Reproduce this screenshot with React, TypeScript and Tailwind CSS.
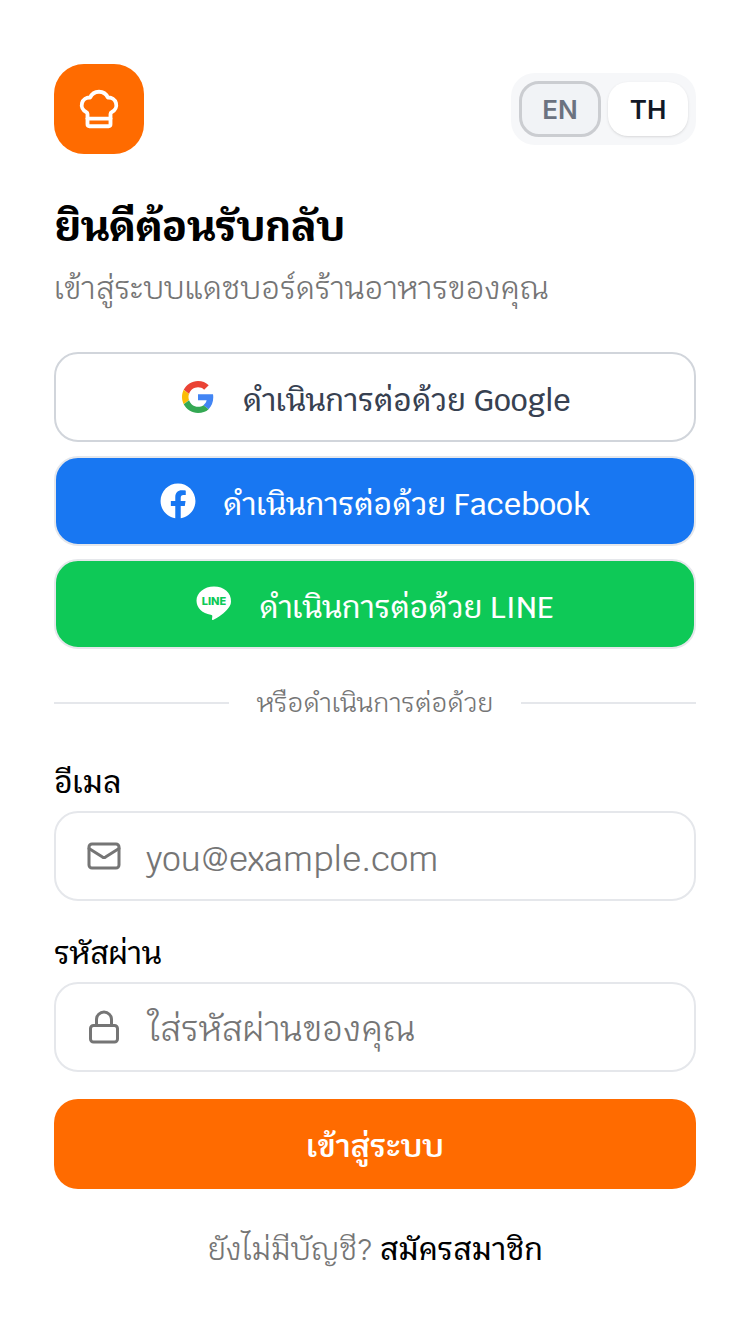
import { ChefHat, Lock, Mail } from "lucide-react";
import { FaFacebook } from "react-icons/fa";

function GoogleIcon() {
  return (
    <span className="flex h-[36px] w-[36px] items-center justify-center">
      <svg width="32" height="32" viewBox="0 0 48 48">
        <path fill="#EA4335" d="M24 9.500c3.500 0 6.700 1.200 9.200 3.600l6.900-6.900C35.900 2.400 30.500 0 24 0 14.600 0 6.500 5.400 2.600 13.200l8 6.200C12.500 13.600 17.800 9.500 24 9.500z" />
        <path fill="#4285F4" d="M46.900 24.500c0-1.600-.1-3.100-.4-4.500H24v9h12.900c-.6 3-2.200 5.500-4.800 7.200l7.700 6c4.500-4.200 7.100-10.300 7.100-17.700z" />
        <path fill="#FBBC05" d="M10.500 28.600c-.5-1.500-.8-3-.8-4.600s.3-3.200.8-4.600l-8-6.200C.9 16.500 0 20.100 0 24s.9 7.500 2.600 10.800l7.900-6.200z" />
        <path fill="#34A853" d="M24 48c6.500 0 11.900-2.100 15.900-5.800l-7.700-6c-2.200 1.500-4.900 2.300-8.200 2.300-6.200 0-11.500-4.200-13.400-9.800l-8 6.200C6.500 42.600 14.600 48 24 48z" />
      </svg>
    </span>
  );
}

function LineIcon() {
  return (
    <svg width="36" height="36" viewBox="0 0 36 36">
      <path fill="#fff" d="M18 .5C8.100.5.500 6.800.5 14.700c0 7.100 6 12.900 14.200 14 .6.100 1.300.4 1.500.9.200.5.100 1.200 0 1.700l-.2 1.400c-.1.500-.3 1.700 1.500 1 1.800-.8 9.700-5.700 13.300-9.800 2.400-2.600 4.200-5.300 4.200-8.200C35.500 6.800 27.900.5 18 .5z" />
      <text x="18" y="19" textAnchor="middle" fontSize="11" fontWeight="800" fill="#0ec957" fontFamily="Inter, sans-serif">LINE</text>
    </svg>
  );
}

const socials = [
  { label: "ดำเนินการต่อด้วย Google", icon: <GoogleIcon />, cls: "bg-white text-[#374151] border-[#d1d5db]" },
  { label: "ดำเนินการต่อด้วย Facebook", icon: <FaFacebook size={36} />, cls: "bg-[#1877f2] text-white border-[#e5e7eb]" },
  { label: "ดำเนินการต่อด้วย LINE", icon: <LineIcon />, cls: "-mt-px bg-[#0ec957] text-white border-[#e5e7eb]" },
];

export default function App() {
  return (
    <div className="min-h-[1334px] bg-white px-[54px] pt-[64px] font-['Krub','Noto_Sans',sans-serif] text-black">
      <div className="flex items-center justify-between">
        <div className="flex h-[90px] w-[90px] items-center justify-center rounded-[30px] bg-[#ff6b00] text-white">
          <ChefHat size={46} strokeWidth={2} />
        </div>
        <div className="flex h-[72px] w-[185px] items-center gap-[7px] rounded-[24px] bg-[#f6f7f9] pl-[8px] font-['Inter',sans-serif]">
          <div className="flex h-[56px] w-[82px] items-center justify-center rounded-[20px] border-[3px] border-[#cbcdd1] bg-[#f1f3f6] text-[26px] font-semibold text-[#6b7280]">EN</div>
          <div className="flex h-[54px] w-[80px] items-center justify-center rounded-[20px] bg-white text-[26px] font-semibold text-[#111827] shadow-sm">TH</div>
        </div>
      </div>

      <h1 className="mt-[47px] text-[40.5px] leading-[52px] font-bold">ยินดีต้อนรับกลับ</h1>
      <p className="mt-[13px] text-[30.8px] leading-[44px] text-[#757575]">เข้าสู่ระบบแดชบอร์ดร้านอาหารของคุณ</p>

      <div className="mt-[42px] flex flex-col gap-[14px]">
        {socials.map((s) => (
          <div key={s.label} className={`flex h-[90px] items-center justify-center gap-[27px] rounded-[24px] border-2 text-[30.25px] font-medium ${s.cls}`}>
            {s.icon}
            <span className="pt-[8px]">{s.label}</span>
          </div>
        ))}
      </div>

      <div className="mt-[39px] flex items-center gap-[28px]">
        <div className="h-[2px] flex-1 bg-[#e5e7eb]" />
        <span className="text-[26.2px] leading-[30px] text-[#757575]">หรือดำเนินการต่อด้วย</span>
        <div className="h-[2px] flex-1 bg-[#e5e7eb]" />
      </div>

      <label className="mt-[45px] block text-[30px] leading-[40px] font-medium">อีเมล</label>
      <div className="mt-[8px] flex h-[90px] items-center gap-[24px] rounded-[24px] border-2 border-[#e5e7eb] pl-[30px] text-[33.5px] text-[#757575]">
        <Mail size={36} strokeWidth={2} className="shrink-0" />
        <span className="pt-[6px]">you@example.com</span>
      </div>

      <label className="mt-[33px] block text-[30px] leading-[40px] font-medium">รหัสผ่าน</label>
      <div className="mt-[8px] flex h-[90px] items-center gap-[26px] rounded-[24px] border-2 border-[#e5e7eb] pl-[30px] text-[34.5px] text-[#757575]">
        <Lock size={36} strokeWidth={2} className="shrink-0" />
        <span className="pt-[4px]">ใส่รหัสผ่านของคุณ</span>
      </div>

      <div className="mt-[27px] flex h-[90px] items-center justify-center rounded-[24px] bg-[#ff6b00] text-[31px] font-semibold text-white">
        <span className="pt-[4px]">เข้าสู่ระบบ</span>
      </div>

      <p className="mt-[39px] text-center text-[30px] leading-[44px] text-[#757575]">
        ยังไม่มีบัญชี? <span className="font-medium text-black">สมัครสมาชิก</span>
      </p>
    </div>
  );
}
